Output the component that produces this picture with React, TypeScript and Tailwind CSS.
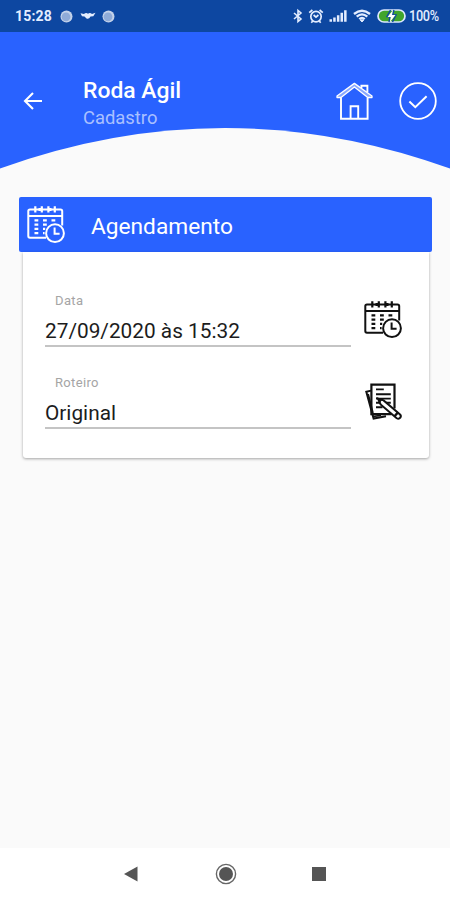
import React from "react";

interface IconProps {
  className?: string;
}

function CalendarIcon({ className }: IconProps) {
  return (
    <svg viewBox="0 0 38 38" className={className} fill="none" stroke="currentColor" strokeWidth="2">
      <path d="M19 31.7H3Q1.3 31.7 1.3 30V5Q1.3 3.4 3 3.4H33.5Q35.2 3.4 35.2 5V19.5" />
      <path d="M1.2 10H35.2" />
      <path d="M8.3 .3V6.4M14.8 .3V6.4M21.4 .3V6.4M27.8 .3V6.4" strokeWidth="2.2" />
      <path d="M11.5 3.4H15M21 3.4H24.5" strokeWidth="3" />
      <path d="M7.5 14.3h3.8M16 14.3h3.8M24.5 14.3h3.8M7.5 18.6h3.8M16 18.6h3.8M7.5 22.9h3.8M16 22.9h2.2M7.5 27.2h3.8M16 27.2h1.6" strokeWidth="2.3" />
      <circle cx="28" cy="27.2" r="8.9" />
      <path d="M27.6 21.5V27.7H32.6" />
    </svg>
  );
}

function DocumentIcon({ className }: IconProps) {
  return (
    <svg viewBox="0 0 38 38" className={className} fill="none" stroke="currentColor" strokeWidth="2">
      <path d="M6 7.6L1.3 8.8L8.6 35.6L21 33.2" />
      <path d="M3.2 11L8 30M8 33.5L16 32.4" strokeWidth="1.6" />
      <path d="M26.5 31.2H6.4V1.6H29.5V25.5" strokeWidth="2.2" />
      <path d="M11 6.4h7.8M11 11.2H25.8M11 15.6H25.8M11 19.8h4M21 19.8h4.8M11 24.2h6.5" strokeWidth="1.9" />
      <path d="M13 15.6L15.6 21.4L31.4 35Q33.8 36.6 35.3 34.7Q36.6 32.8 34.8 31.2L18.6 17.4Z" fill="white" strokeWidth="2" />
      <path d="M13 15.6L16.6 16.6L14.6 19Z" fill="currentColor" strokeWidth="1.4" />
      <path d="M29.5 33.2L32.8 29.6" strokeWidth="2.4" />
    </svg>
  );
}

function HomeIcon() {
  return (
    <svg viewBox="0 0 38 39" className="h-[39px] w-[38px]" fill="none" stroke="white" strokeWidth="1.9">
      <path d="M5 15.5V36.8H31.6V15.5" />
      <path d="M18.4 1.4L1 14V15.5H5L18.4 5L31.8 15.5H36V14Z" fill="white" fillOpacity=".45" strokeWidth="1.3" strokeLinejoin="round" />
      <path d="M25.4 6V3.7H31.4V10.2" />
      <path d="M14.6 37V24.2H22.2V37" />
    </svg>
  );
}

function CheckIcon() {
  return (
    <svg viewBox="0 0 38 38" className="size-[38px]" fill="none" stroke="white" strokeWidth="1.8">
      <circle cx="19" cy="19" r="17.8" />
      <path d="M10.4 19.5L16.3 25.2L27.6 14.3" strokeWidth="2" />
    </svg>
  );
}

function Bubble() {
  return (
    <svg viewBox="0 0 13 13" className="size-[13px]">
      <circle cx="6.5" cy="6.5" r="6" fill="#c3d2ea" />
      <circle cx="6" cy="6.8" r="4.4" fill="#8fabd8" />
    </svg>
  );
}

function StatusBar() {
  return (
    <div className="flex h-8 items-center bg-[#0d47a1] pl-[15px] pr-[11px] text-[#e3edff]">
      <span className="mt-px w-[38px] whitespace-nowrap text-[14px] font-bold tracking-[0.2px]">15:28</span>
      <div className="ml-[7px] flex items-center gap-[6.5px]">
        <Bubble />
        <svg viewBox="0 0 16 8" className="h-2 w-4" fill="#e3edff">
          <path d="M.5 1.2L4 2Q6 .4 8 1.7Q10 .4 12 2L15.5 .8L13.3 4.2L10.5 4.5Q9 7.5 6.5 6.5L4.5 4.6L2 4.2Z" />
        </svg>
        <Bubble />
      </div>
      <div className="ml-auto flex items-center">
        <svg viewBox="0 0 10 16" className="h-4 w-[10px]" fill="none" stroke="currentColor" strokeWidth="1.6">
          <path d="M1 5L8 11L5 13.6V2.4L8 5L1 11" />
        </svg>
        <svg viewBox="0 0 16 16" className="ml-[5px] size-4" fill="none" stroke="currentColor" strokeWidth="1.7">
          <circle cx="8" cy="8.6" r="5.2" />
          <path d="M1.2 4.7L4.4 2M14.8 4.7L11.6 2M3.3 14.8L5 12.8M12.7 14.8L11 12.8M5.6 7L8 9.2L10.4 7" />
        </svg>
        <svg viewBox="0 0 18 14" className="ml-[5px] h-[14px] w-[18px]" fill="currentColor">
          <path d="M.5 10.3h2.5v2.5H.5zM4.2 8.6h2.5v4.2H4.2zM7.9 6.2h2.5v6.6H7.9zM11.5 3.8h2.5v9h-2.5zM15.1 1.2h2.5v11.6h-2.5z" />
        </svg>
        <svg viewBox="0 0 18 14" className="ml-[6px] h-[14px] w-[18px]" fill="none" stroke="currentColor" strokeWidth="2.3">
          <path d="M1 5Q9 -1.6 17 5M3.7 7.7Q9 3 14.3 7.7M6.3 10.2Q9 7.7 11.7 10.2" />
          <path d="M7.3 11L9 13L10.7 11Z" fill="currentColor" strokeWidth="1" />
        </svg>
        <svg viewBox="0 0 29 14" className="ml-[6px] h-[14px] w-[29px]">
          <rect x="1" y="1" width="27" height="12" rx="6" fill="#41a52c" stroke="#dce8ff" strokeWidth="1.7" />
          <path d="M13.5 1L10 7.5H13L12 13M17 1L15.5 6H19L15.5 13" fill="none" stroke="#0d47a1" strokeWidth="1.4" />
          <path d="M16 1L10.5 8H13.8L12.8 13.2L18.5 6H15Z" fill="white" />
        </svg>
        <span className="ml-[3px] mt-px w-[30px] origin-left scale-x-[0.91] whitespace-nowrap text-[14px] font-medium tracking-[-0.4px]">100%</span>
      </div>
    </div>
  );
}

function Header() {
  return (
    <header className="h-[137px] bg-[#2962ff]">
      <div className="flex h-24 items-start">
        <svg viewBox="0 0 20 18" className="ml-[23px] mt-[60px] h-[18px] w-5" fill="none" stroke="white" strokeWidth="2.1">
          <path d="M19 9H2M10 1L2 9L10 17" />
        </svg>
        <div className="ml-10 mt-[45px] w-[253px]">
          <h1 className="text-[22.9px] font-medium leading-7 text-white">Roda Ágil</h1>
          <p className="text-[18.4px] leading-[25px] text-[#a9c0ff]">Cadastro</p>
        </div>
        <div className="mt-[50px] flex gap-[25px]">
          <HomeIcon />
          <CheckIcon />
        </div>
      </div>
      <svg viewBox="0 0 450 41" className="block h-[41px] w-full">
        <path d="M0 41V40.5Q225 -40.5 450 40.5V41Z" fill="#fafafa" />
      </svg>
    </header>
  );
}

interface FieldProps {
  label: string;
  value: string;
  children: React.ReactNode;
}

function Field({ label, value, children }: FieldProps) {
  return (
    <div className="flex h-[82px]">
      <div className="h-[57px] w-[306px] border-b-2 border-[#c4c4c4]">
        <div className="pl-[10px] pt-px text-[13px] leading-5 tracking-[0.35px] text-[#a5a5a5]">{label}</div>
        <div className="mt-1.5 text-[20.8px] leading-7 text-[#1c1c1c]">{value}</div>
      </div>
      <div className="ml-[13px] mt-[11px] text-[#111]">{children}</div>
    </div>
  );
}

export default function App() {
  return (
    <main className="flex h-[900px] w-[450px] flex-col overflow-hidden bg-[#fafafa] font-['Roboto',sans-serif]">
      <StatusBar />
      <Header />
      <section className="mt-7">
        <div className="ml-[19px] flex h-[55px] w-[413px] items-center rounded-[2px] bg-[#2962ff] text-white">
          <CalendarIcon className="ml-2 size-[38px]" />
          <h2 className="ml-[26px] mt-[5px] text-[22.7px] leading-7">Agendamento</h2>
        </div>
        <div className="ml-[23px] h-[206px] w-[406px] rounded-b-[3px] bg-white pl-[22px] pt-[38px] shadow-[0_1px_3px_rgba(0,0,0,0.35)]">
          <Field label="Data" value="27/09/2020 às 15:32">
            <CalendarIcon className="size-[38px]" />
          </Field>
          <Field label="Roteiro" value="Original">
            <DocumentIcon className="ml-px size-[38px]" />
          </Field>
        </div>
      </section>
      <nav className="mt-auto flex h-[52px] items-center bg-white">
        <svg viewBox="0 0 14 16" className="ml-[124px] h-4 w-[14px]" fill="#555">
          <path d="M0 8L13.5 .5V15.5Z" />
        </svg>
        <svg viewBox="0 0 22 22" className="ml-[77px] size-[22px]">
          <circle cx="11" cy="11" r="9.6" fill="none" stroke="#666" strokeWidth="1.4" />
          <circle cx="11" cy="11" r="7" fill="#555" />
        </svg>
        <div className="ml-[75px] size-[14px] bg-[#555]" />
      </nav>
    </main>
  );
}
